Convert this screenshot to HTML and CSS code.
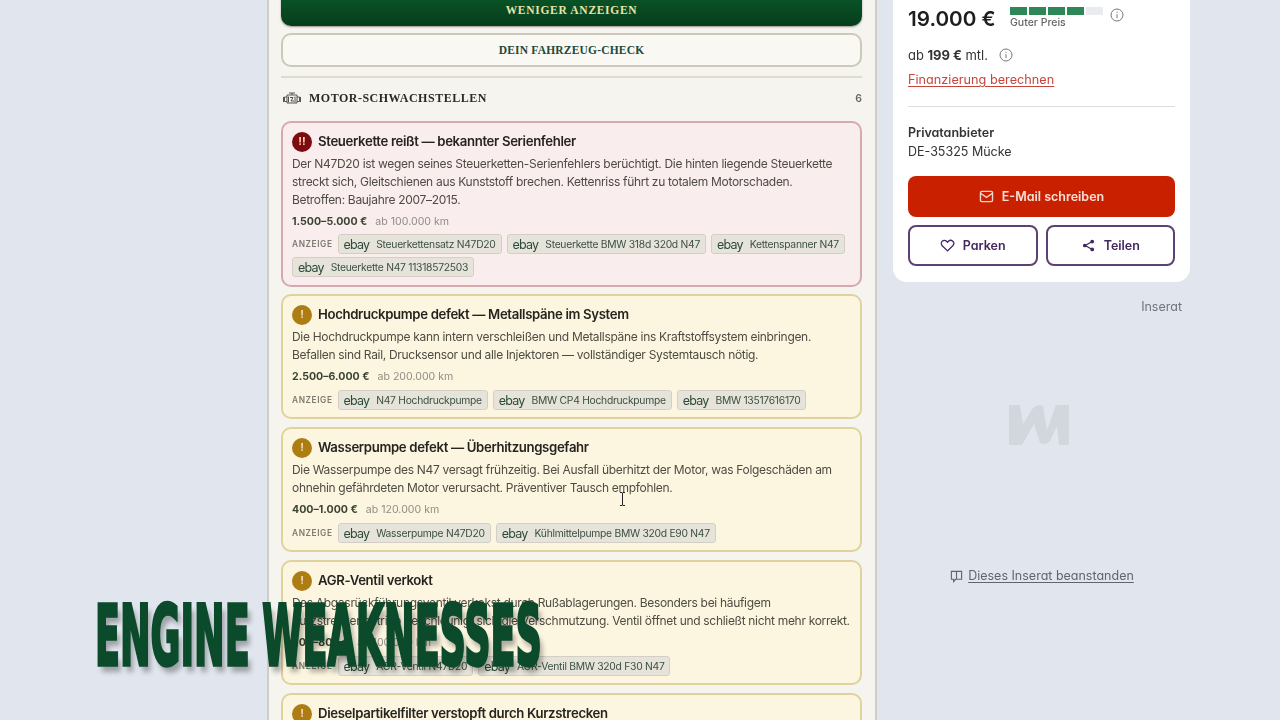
FILE: index.html
```html
<!DOCTYPE html>
<html lang="de">
<head>
<meta charset="utf-8">
<title>Motor-Schwachstellen</title>
<link rel="stylesheet" href="styles.css">
</head>
<body>
<div class="page">
  <main class="column">
    <button class="btn-green">WENIGER ANZEIGEN</button>
    <button class="btn-light">DEIN FAHRZEUG-CHECK</button>
    <div class="section-head">
      <svg class="engine" viewBox="0 0 18 14" fill="none" stroke="#55554c" stroke-width="1"><path d="M6 1h6M9 1v2M4 3h10v8H4zM4 5H1.500v4.500H4M14 5h2.500v4.500H14M.5 5v5M17.500 5v5"/><path d="M7 5.500h3L8 9h3M12 4.500v6M5.500 4.500v6"/></svg>
      <h2>MOTOR-SCHWACHSTELLEN</h2>
      <span class="count">6</span>
    </div>

    <article class="issue critical">
      <h3><span class="badge">!!</span>Steuerkette reißt — bekannter Serienfehler</h3>
      <p>Der N47D20 ist wegen seines Steuerketten-Serienfehlers berüchtigt. Die hinten liegende Steuerkette streckt sich, Gleitschienen aus Kunststoff brechen. Kettenriss führt zu totalem Motorschaden.<br>Betroffen: Baujahre 2007–2015.</p>
      <div class="meta"><b>1.500–5.000 €</b><span>ab 100.000 km</span></div>
      <div class="ads"><span class="ad-label">ANZEIGE</span>
        <a class="chip"><i>ebay</i>Steuerkettensatz N47D20</a>
        <a class="chip"><i>ebay</i>Steuerkette BMW 318d 320d N47</a>
        <a class="chip"><i>ebay</i>Kettenspanner N47</a>
        <a class="chip"><i>ebay</i>Steuerkette N47 11318572503</a>
      </div>
    </article>

    <article class="issue warn">
      <h3><span class="badge">!</span>Hochdruckpumpe defekt — Metallspäne im System</h3>
      <p>Die Hochdruckpumpe kann intern verschleißen und Metallspäne ins Kraftstoffsystem einbringen. Befallen sind Rail, Drucksensor und alle Injektoren — vollständiger Systemtausch nötig.</p>
      <div class="meta"><b>2.500–6.000 €</b><span>ab 200.000 km</span></div>
      <div class="ads"><span class="ad-label">ANZEIGE</span>
        <a class="chip"><i>ebay</i>N47 Hochdruckpumpe</a>
        <a class="chip"><i>ebay</i>BMW CP4 Hochdruckpumpe</a>
        <a class="chip"><i>ebay</i>BMW 13517616170</a>
      </div>
    </article>

    <article class="issue warn">
      <h3><span class="badge">!</span>Wasserpumpe defekt — Überhitzungsgefahr</h3>
      <p>Die Wasserpumpe des N47 versagt frühzeitig. Bei Ausfall überhitzt der Motor, was Folgeschäden am ohnehin gefährdeten Motor verursacht. Präventiver Tausch empfohlen.</p>
      <div class="meta"><b>400–1.000 €</b><span>ab 120.000 km</span></div>
      <div class="ads"><span class="ad-label">ANZEIGE</span>
        <a class="chip"><i>ebay</i>Wasserpumpe N47D20</a>
        <a class="chip"><i>ebay</i>Kühlmittelpumpe BMW 320d E90 N47</a>
      </div>
    </article>

    <article class="issue warn">
      <h3><span class="badge">!</span>AGR-Ventil verkokt</h3>
      <p>Das Abgasrückführungsventil verkokst durch Rußablagerungen. Besonders bei häufigem Kurzstreckenbetrieb beschleunigt sich die Verschmutzung. Ventil öffnet und schließt nicht mehr korrekt.</p>
      <div class="meta"><b>200–800 €</b><span>ab 100.000 km</span></div>
      <div class="ads"><span class="ad-label">ANZEIGE</span>
        <a class="chip"><i>ebay</i>AGR-Ventil N47D20</a>
        <a class="chip"><i>ebay</i>AGR-Ventil BMW 320d F30 N47</a>
      </div>
    </article>

    <article class="issue warn">
      <h3><span class="badge">!</span>Dieselpartikelfilter verstopft durch Kurzstrecken</h3>
    </article>
  </main>

  <aside class="side">
    <section class="card">
      <div class="price-row">
        <strong class="price">19.000 €</strong>
        <div class="rating">
          <div class="bars"><span></span><span></span><span></span><span></span><span class="off"></span></div>
          <small>Guter Preis</small>
        </div>
        <svg class="info" viewBox="0 0 14 14" fill="none" stroke="#777" stroke-width="1"><circle cx="7" cy="7" r="6"/><path d="M7 6.200v4M7 3.800v1"/></svg>
      </div>
      <div class="rate">ab <b>199 €</b> mtl.<svg class="info" viewBox="0 0 14 14" fill="none" stroke="#777" stroke-width="1"><circle cx="7" cy="7" r="6"/><path d="M7 6.200v4M7 3.800v1"/></svg></div>
      <a class="finance">Finanzierung berechnen</a>
      <hr>
      <div class="seller"><b>Privatanbieter</b><span>DE-35325 Mücke</span></div>
      <button class="btn-red"><svg viewBox="0 0 16 14" fill="none" stroke="#f8d5cc" stroke-width="1.500"><rect x="1.500" y="1.500" width="13" height="11" rx="1.500"/><path d="M1.500 3.500L8 8l6.500-4.500"/></svg>E-Mail schreiben</button>
      <div class="btn-row">
        <button class="btn-outline"><svg viewBox="0 0 16 14" fill="none" stroke="#43275f" stroke-width="1.400"><path d="M8 12.800L2.300 7.200a3.300 3.300 0 0 1 4.700-4.700l1 1 1-1a3.300 3.300 0 0 1 4.700 4.700z"/></svg>Parken</button>
        <button class="btn-outline"><svg viewBox="0 0 14 14" fill="none" stroke="#43275f" stroke-width="1.400"><path d="M10.500 3L3.500 7l7 4"/><circle cx="11" cy="2.800" r="1.300" fill="#43275f"/><circle cx="3" cy="7" r="1.300" fill="#43275f"/><circle cx="11" cy="11.200" r="1.300" fill="#43275f"/></svg>Teilen</button>
      </div>
    </section>
    <div class="ad-note">Inserat</div>
    <div class="ad-space">
      <svg viewBox="0 0 60 41" fill="#d2d7de"><path d="M0 1H11L14 20L24 4Q28 0 34 2L38 26L47 1H60V41H50L48 22L41 37Q37 42 31 39L25 20L13 41H0Z"/></svg>
    </div>
    <a class="report"><svg viewBox="0 0 14 14" fill="none" stroke="#5f6670" stroke-width="1.200"><path d="M1.500 1.500h11v8.500H6L4 12.500V10H1.500zM7 1.500V10"/></svg><span>Dieses Inserat beanstanden</span></a>
  </aside>
</div>

<div class="title-overlay"><span>ENGINE WEAKNESSES</span></div>
<svg class="cursor" viewBox="0 0 7 14" fill="none" stroke="#222" stroke-width="1"><path d="M1 .5h2l.5.5.5-.5h2M3.500 1v12M1 13.500h2l.5-.5.5.5h2"/></svg>
</body>
</html>
```
FILE: styles.css
```css
* { box-sizing: border-box; }
html, body { margin: 0; height: 720px; overflow: hidden; }
body {
  position: relative;
  background: #e1e6ee;
  font-family: Inter, "Liberation Sans", sans-serif;
  color: #222;
}
button { font: inherit; cursor: pointer; }

.page {
  display: flex;
  align-items: flex-start;
  gap: 16px;
  padding-left: 267px;
  height: 720px;
  overflow: hidden;
  filter: blur(0.35px);
}

/* Main column */
.column {
  width: 610px;
  flex: none;
  margin-top: -30px;
  padding: 0 13px 40px 12px;
  background: #f6f4ee;
  border-left: 2px solid #cfcdc4;
  border-right: 2px solid #cfcdc4;
  min-height: 800px;
}
.btn-green, .btn-light {
  display: block;
  width: 100%;
  text-align: center;
  font-family: "Liberation Serif", serif;
  font-weight: 700;
}
.btn-green {
  height: 56px;
  padding-top: 25px;
  border: 0;
  border-radius: 10px;
  background: linear-gradient(#0d6a33, #063d1b);
  box-shadow: 0 1px 2px rgba(0,0,0,.4);
  color: #e9e3a5;
  font-size: 11.500px;
  letter-spacing: 0.7px;
}
.btn-light {
  height: 34px;
  margin-top: 7px;
  border: 2px solid #cdc8ba;
  border-radius: 10px;
  background: #f9f8f3;
  color: #23483a;
  font-size: 11.500px;
  letter-spacing: 0.2px;
}
.section-head {
  display: flex;
  align-items: center;
  height: 44px;
  margin-top: 9px;
  border-top: 2px solid #dedbd1;
  padding: 0 0 1px 2px;
}
.engine { width: 18px; height: 14px; flex: none; margin-right: 8px; }
.section-head h2 {
  margin: 0;
  flex: 1;
  font-family: "Liberation Serif", serif;
  font-size: 12px;
  font-weight: 700;
  letter-spacing: 0.5px;
  color: #2a2a26;
}
.count { font-size: 10.500px; font-weight: 600; color: #666; }

.issue {
  margin-bottom: 8px;
  padding: 8px 6px 7px 9px;
  border: 2px solid;
  border-radius: 10px;
}
.critical { background: #f9eded; border-color: #d5a9ae; margin-top: 1px; margin-bottom: 7px; padding-bottom: 8px; }
.critical .ads { margin-top: 4px; }
.warn { background: #fcf6e1; border-color: #e0d29c; }
.issue h3 {
  display: flex;
  align-items: center;
  gap: 6px;
  margin: 0 0 3px;
  font-size: 13.200px;
  line-height: 21px;
  font-weight: 600;
  letter-spacing: -0.35px;
  color: #26241f;
}
.badge {
  flex: none;
  width: 20px;
  height: 20px;
  border-radius: 50%;
  display: flex;
  align-items: center;
  justify-content: center;
  font-size: 11px;
  font-weight: 700;
  letter-spacing: 0;
  color: #f5d9b0;
}
.critical .badge { background: #7c0a0e; }
.warn .badge { background: #ad7d14; }
.issue p {
  margin: 0;
  font-size: 12px;
  line-height: 18px;
  letter-spacing: -0.31px;
  color: #4e4b42;
}
.meta {
  display: flex;
  gap: 8px;
  margin-top: 5px;
  font-size: 10.600px;
  line-height: 16px;
}
.meta b { font-weight: 700; color: #39432f; }
.meta span { color: #8f8d83; }
.ads {
  display: flex;
  flex-wrap: wrap;
  align-items: center;
  gap: 3px 5px;
  margin-top: 5px;
}
.ad-label {
  font-size: 8.300px;
  font-weight: 600;
  letter-spacing: 0.6px;
  color: #7d7a70;
}
.chip {
  display: inline-flex;
  align-items: center;
  height: 20px;
  padding: 0 5px;
  border: 1px solid #d3d0c3;
  border-radius: 3px;
  background: #e6e4da;
  font-size: 10.300px;
  letter-spacing: -0.27px;
  color: #3c5043;
}
.chip i {
  font-style: normal;
  font-size: 12.500px;
  letter-spacing: -0.8px;
  color: #2c4a38;
  margin-right: 7px;
}

/* Sidebar */
.side {
  width: 297px;
  flex: none;
  display: flex;
  flex-direction: column;
}
.card {
  background: #fff;
  height: 282px;
  padding: 0 15px;
  border-radius: 0 0 14px 14px;
  display: flex;
  flex-direction: column;
}
.price-row {
  display: flex;
  align-items: flex-start;
  padding-top: 6px;
  font-feature-settings: "cv11";
}
.price { font-size: 20.700px; line-height: 26px; font-weight: 600; color: #1e1e20; width: 102px; flex: none; }
.rating { width: 100px; flex: none; }
.bars { display: flex; gap: 2px; margin-top: 1px; }
.bars span { width: 17px; height: 8px; background: #2f8656; }
.bars .off { background: #e9ebee; }
.rating small { display: block; font-size: 10.500px; font-weight: 500; line-height: 13px; color: #666; margin-top: 1px; }
.info { width: 14px; height: 14px; flex: none; margin-top: 2px; margin-left: 0; }
.rate, .finance, .seller, .btn-red, .btn-outline, .ad-note, .report { font-feature-settings: "cv11"; }
.rate { display: flex; align-items: center; gap: 3.500px; margin-top: 14px; font-size: 13px; line-height: 18px; color: #333; }
.rate b { font-weight: 700; }
.rate .info { margin: 0 0 0 8px; }
.finance { margin-top: 7px; font-size: 12.700px; line-height: 18px; color: #c8453d; text-decoration: underline; text-underline-offset: 2px; }
.card hr { width: 100%; margin: 17px 0 0; border: 0; border-top: 1px solid #dcdee2; }
.seller { display: flex; flex-direction: column; margin-top: 16px; font-size: 12.500px; line-height: 19px; color: #333; }
.seller b { font-weight: 600; }
.btn-red, .btn-outline {
  display: flex;
  align-items: center;
  justify-content: center;
  gap: 8px;
  height: 41px;
  border-radius: 8px;
  font-size: 12.500px;
  font-weight: 600;
}
.btn-red { margin-top: 15px; border: 0; background: #c92100; color: #f8e0d8; }
.btn-red svg { width: 15px; height: 13px; }
.btn-row { display: flex; gap: 8px; margin-top: 8px; }
.btn-outline { flex: 1; border: 2px solid #5d4175; background: #fff; color: #43275f; }
.btn-outline svg { width: 15px; height: 13px; }
.ad-note { margin-top: 17px; padding-right: 8px; text-align: right; font-size: 12.500px; line-height: 16px; color: #70757c; }
.ad-space { display: flex; justify-content: center; margin-top: 89px; padding-right: 5px; }
.ad-space svg { width: 60px; height: 41px; }
.report {
  display: flex;
  align-items: center;
  justify-content: center;
  gap: 5px;
  margin-top: 122px;
  font-size: 12.500px;
  line-height: 18px;
  color: #5f6670;
  padding-left: 1px;
}
.report svg { width: 13px; height: 13px; flex: none; }
.report span { text-decoration: underline; text-underline-offset: 2px; }

/* Overlays */
.title-overlay {
  position: absolute;
  left: 95px;
  top: 587px;
  width: 448px;
  height: 100px;
}
.title-overlay span {
  display: inline-block;
  font-family: "DejaVu Sans", sans-serif;
  font-weight: 700;
  font-size: 83px;
  line-height: 100px;
  white-space: nowrap;
  color: #0b4a2a;
  -webkit-text-stroke: 3.500px #0b4a2a;
  text-shadow: 8px 7px 8px rgba(0,0,0,.3);
  transform-origin: 0 0;
  transform: scaleX(0.44);
}
.cursor { position: absolute; left: 619px; top: 492px; width: 7px; height: 14px; }
```
